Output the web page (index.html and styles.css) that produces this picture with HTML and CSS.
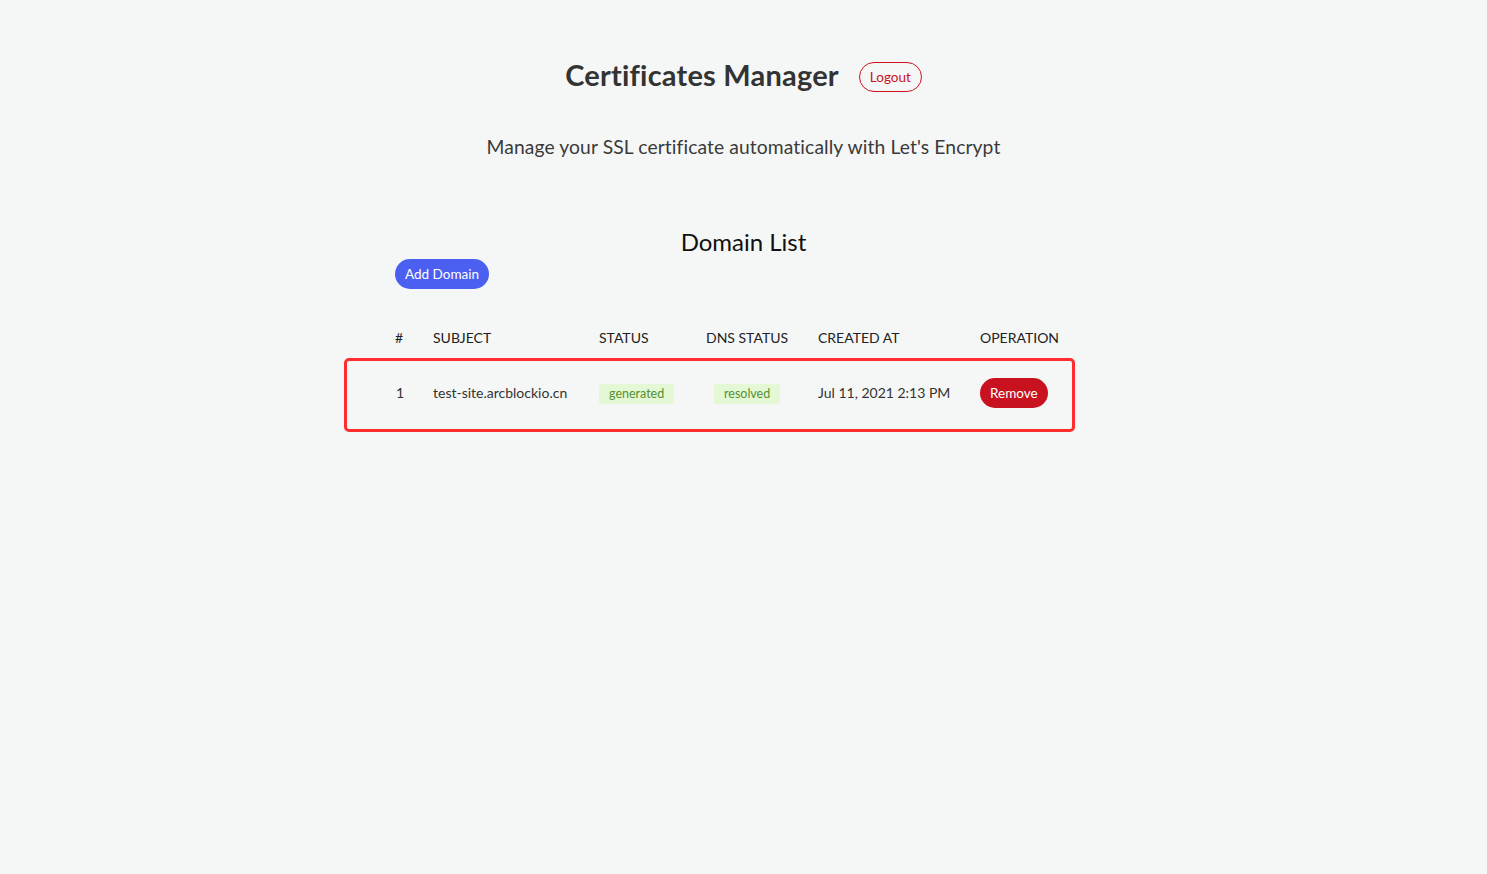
FILE: index.html
```html
<!DOCTYPE html>
<html lang="en">
<head>
<meta charset="utf-8">
<title>Certificates Manager</title>
<link rel="stylesheet" href="styles.css">
</head>
<body>
<main class="page">
  <header class="header">
    <h1 class="title">Certificates Manager</h1>
    <button class="btn-logout">Logout</button>
  </header>
  <p class="subtitle">Manage your SSL certificate automatically with Let's Encrypt</p>

  <section class="list">
    <h2 class="list-title">Domain List</h2>
    <div class="toolbar"><button class="btn-add">Add Domain</button></div>
    <table class="table">
      <thead>
        <tr>
          <th class="c-num">#</th>
          <th class="c-subject">SUBJECT</th>
          <th class="c-status">STATUS</th>
          <th class="c-dns">DNS STATUS</th>
          <th class="c-created">CREATED AT</th>
          <th class="c-op">OPERATION</th>
        </tr>
      </thead>
      <tbody>
        <tr class="row-highlight">
          <td>1</td>
          <td>test-site.arcblockio.cn</td>
          <td><span class="tag">generated</span></td>
          <td class="dns-cell"><span class="tag">resolved</span></td>
          <td>Jul 11, 2021 2:13 PM</td>
          <td><button class="btn-remove">Remove</button></td>
        </tr>
      </tbody>
    </table>
    <div class="highlight-box"></div>
  </section>
</main>
</body>
</html>
```

FILE: styles.css
```css
* { box-sizing: border-box; }
html, body {
  margin: 0;
  padding: 0;
  background: #f5f7f6;
  font-family: Lato, "Noto Sans", "Liberation Sans", sans-serif;
  color: #222;
}
.page {
  display: flex;
  flex-direction: column;
  align-items: center;
  padding-top: 57px;
  min-height: 100vh;
}
.header {
  display: flex;
  align-items: center;
  gap: 20px;
}
.title {
  margin: 0;
  font-size: 29px;
  font-weight: 700;
  color: #333;
  letter-spacing: 0.2px;
  line-height: 36px;
}
.btn-logout {
  font-family: inherit;
  height: 30px;
  padding: 0 10px;
  border: 1px solid #d0121d;
  border-radius: 15px;
  background: transparent;
  color: #c8121f;
  font-size: 13.5px;
  margin-top: 4px;
}
.subtitle {
  margin: 42px 0 0;
  font-size: 19.3px;
  color: #3a3a3a;
  line-height: 24px;
  letter-spacing: 0.1px;
}
.list {
  position: relative;
  width: 697px;
  margin-top: 68px;
  padding-bottom: 20px;
}
.list-title {
  margin: 0;
  text-align: center;
  font-size: 24px;
  font-weight: 400;
  color: #111;
  line-height: 30px;
}
.toolbar {
  display: flex;
  margin-top: 2px;
}
.btn-add {
  font-family: inherit;
  height: 30px;
  padding: 0 10px;
  border: none;
  border-radius: 15px;
  background: #4b5ff0;
  color: #fff;
  font-size: 13.5px;
}
.table {
  margin-top: 39px;
  border-collapse: collapse;
  table-layout: fixed;
  width: 697px;
}
.table th {
  text-align: left;
  font-weight: 400;
  font-size: 14px;
  color: #222;
  padding: 0 0 9px;
  height: 29px;
  line-height: 20px;
  vertical-align: top;
}
.c-num { width: 38px; }
.c-subject { width: 166px; }
.c-status { width: 107px; }
.c-dns { width: 112px; }
.c-created { width: 162px; }
.table td {
  font-size: 14px;
  color: #333;
  padding: 0;
  height: 72px;
  vertical-align: middle;
  line-height: 20px;
}
.table td:first-child { padding-left: 1px; }
.dns-cell { padding-left: 8px !important; }
.tag {
  display: inline-block;
  height: 20px;
  line-height: 20px;
  padding: 0 10px;
  background: #e4f8d5;
  color: #559030;
  font-size: 12.5px;
  border-radius: 2px;
}
.btn-remove {
  font-family: inherit;
  height: 30px;
  padding: 0 10px;
  border: none;
  border-radius: 15px;
  background: #c8121f;
  color: #fff;
  font-size: 13.5px;
}
.highlight-box {
  position: absolute;
  left: -51px;
  top: 131px;
  width: 731px;
  height: 74px;
  border: 3px solid #ff2d2d;
  border-radius: 5px;
  pointer-events: none;
}
```
